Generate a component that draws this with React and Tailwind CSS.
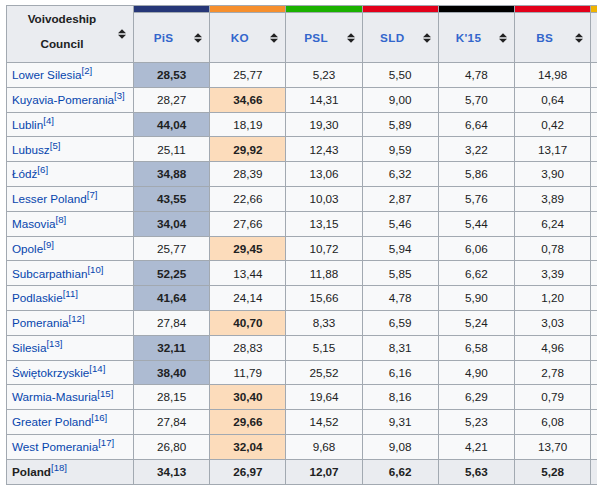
import React from 'react';

const parties = [
  { name: 'PiS', color: 'bg-[#263778]' },
  { name: 'KO', color: 'bg-[#f68f2d]' },
  { name: 'PSL', color: 'bg-[#1bb100]' },
  { name: 'SLD', color: 'bg-[#e2001a]' },
  { name: "K'15", color: 'bg-[#000000]' },
  { name: 'BS', color: 'bg-[#e2001a]' },
];

// hl: index of the winning column (0 = PiS, 1 = KO)
const rows = [
  ['Lower Silesia', 2, 0, ['28,53', '25,77', '5,23', '5,50', '4,78', '14,98']],
  ['Kuyavia-Pomerania', 3, 1, ['28,27', '34,66', '14,31', '9,00', '5,70', '0,64']],
  ['Lublin', 4, 0, ['44,04', '18,19', '19,30', '5,89', '6,64', '0,42']],
  ['Lubusz', 5, 1, ['25,11', '29,92', '12,43', '9,59', '3,22', '13,17']],
  ['Łódź', 6, 0, ['34,88', '28,39', '13,06', '6,32', '5,86', '3,90']],
  ['Lesser Poland', 7, 0, ['43,55', '22,66', '10,03', '2,87', '5,76', '3,89']],
  ['Masovia', 8, 0, ['34,04', '27,66', '13,15', '5,46', '5,44', '6,24']],
  ['Opole', 9, 1, ['25,77', '29,45', '10,72', '5,94', '6,06', '0,78']],
  ['Subcarpathian', 10, 0, ['52,25', '13,44', '11,88', '5,85', '6,62', '3,39']],
  ['Podlaskie', 11, 0, ['41,64', '24,14', '15,66', '4,78', '5,90', '1,20']],
  ['Pomerania', 12, 1, ['27,84', '40,70', '8,33', '6,59', '5,24', '3,03']],
  ['Silesia', 13, 0, ['32,11', '28,83', '5,15', '8,31', '6,58', '4,96']],
  ['Świętokrzyskie', 14, 0, ['38,40', '11,79', '25,52', '6,16', '4,90', '2,78']],
  ['Warmia-Masuria', 15, 1, ['28,15', '30,40', '19,64', '8,16', '6,29', '0,79']],
  ['Greater Poland', 16, 1, ['27,84', '29,66', '14,52', '9,31', '5,23', '6,08']],
  ['West Pomerania', 17, 1, ['26,80', '32,04', '9,68', '9,08', '4,21', '13,70']],
];

const total = ['34,13', '26,97', '12,07', '6,62', '5,63', '5,28'];

function SortIcon() {
  return (
    <svg width="8" height="10" viewBox="0 0 8 10" className="absolute right-[7px] top-1/2 -translate-y-1/2">
      <path d="M0 4.2L4 0.2L8 4.2Z M0 5.8L4 9.8L8 5.8Z" fill="#202122" />
    </svg>
  );
}

function Ref({ n }) {
  return <sup className="text-[9.6px] font-normal text-[#0645ad] align-super leading-none top-0">[{n}]</sup>;
}

export default function App() {
  return (
    <div className="w-[597px] h-[486px] overflow-hidden bg-white pt-[5px] pl-[6px]" style={{ fontFamily: '"Liberation Sans", Arial, sans-serif' }}>
      <table className="table-fixed border-collapse text-[11.7px] text-[#202122] w-[662px]">
        <colgroup>
          <col className="w-[126px]" />
          {parties.map((p) => (
            <col key={p.name} className="w-[75.7px]" />
          ))}
          <col className="w-[76px]" />
        </colgroup>
        <thead>
          <tr className="h-[7px]">
            <th rowSpan={2} className="relative border border-[#a2a9b1] bg-[#eaecf0] font-bold leading-[25px] pl-[5px] pr-[21px] pb-[6px] text-center align-middle">
              Voivodeship
              <br />
              Council
              <SortIcon />
            </th>
            {parties.map((p) => (
              <th key={p.name} className={`border border-[#a2a9b1] p-0 ${p.color}`} />
            ))}
            <th className="border border-[#a2a9b1] p-0 bg-[#f0b400]" />
          </tr>
          <tr className="h-[48px]">
            {parties.map((p) => (
              <th key={p.name} className="relative border border-[#a2a9b1] bg-[#eaecf0] font-bold text-[#3366cc] pl-[5px] pr-[21px] text-center tracking-[0.3px]">
                {p.name}
                <SortIcon />
              </th>
            ))}
            <th className="border border-[#a2a9b1] bg-[#eaecf0]" />
          </tr>
        </thead>
        <tbody>
          {rows.map(([name, ref, hl, vals]) => (
            <tr key={name} className="h-[24.8px]">
              <td className="border border-[#a2a9b1] bg-[#f8f9fa] pl-[5px] pr-[4px] py-0 whitespace-nowrap">
                <span className="text-[#0645ad]">{name}</span>
                <Ref n={ref} />
              </td>
              {vals.map((v, i) => (
                <td
                  key={i}
                  className={`border border-[#a2a9b1] text-center py-0 ${
                    i === hl ? (hl === 0 ? 'bg-[#adbbd2] font-bold' : 'bg-[#fcdcbb] font-bold') : 'bg-[#f8f9fa]'
                  }`}
                >
                  {v}
                </td>
              ))}
              <td className="border border-[#a2a9b1] bg-[#f8f9fa]" />
            </tr>
          ))}
          <tr className="h-[24.8px] bg-[#eaecf0] font-bold">
            <td className="border border-[#a2a9b1] pl-[5px] pr-[4px] py-0 whitespace-nowrap">
              Poland
              <Ref n={18} />
            </td>
            {total.map((v, i) => (
              <td key={i} className="border border-[#a2a9b1] text-center py-0">
                {v}
              </td>
            ))}
            <td className="border border-[#a2a9b1]" />
          </tr>
        </tbody>
      </table>
    </div>
  );
}
